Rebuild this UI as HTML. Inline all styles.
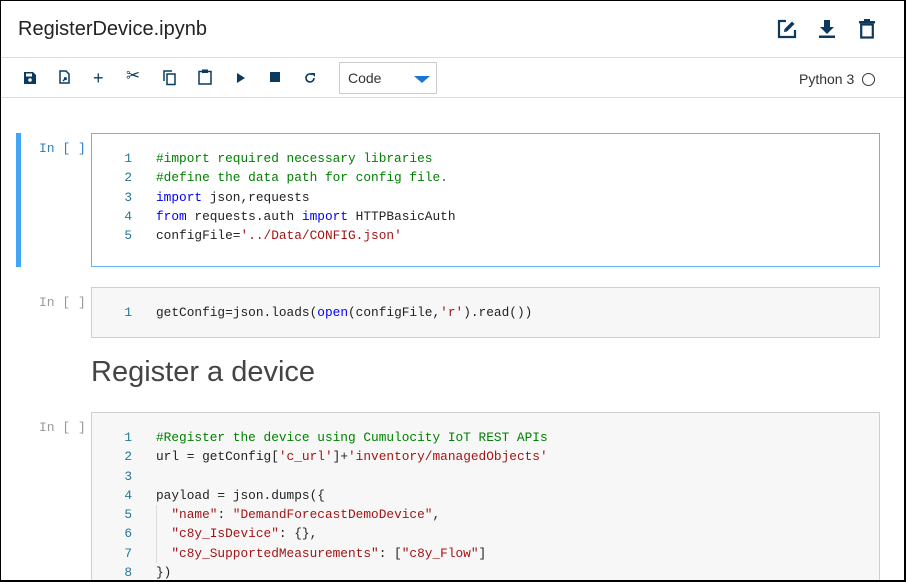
<!DOCTYPE html>
<html style="overflow:hidden"><head><meta charset="utf-8"><style>
*{margin:0;padding:0;box-sizing:border-box}
html,body{width:906px;height:582px;overflow:hidden}
body{background:#fff;font-family:"Liberation Sans",sans-serif;position:relative}
.frame{position:absolute;left:0;top:0;width:906px;height:582px;border:1px solid #000;border-right-width:2px;border-bottom-width:2px;pointer-events:none;z-index:10}
.title{position:absolute;left:18px;top:18px;font-size:20px;color:#222}
.hl{position:absolute;left:0;width:906px;height:1px;background:#dcdcdc}
.ic{position:absolute}
.sel{position:absolute;left:339px;top:62px;width:98px;height:32px;border:1px solid #ccc;font-size:14px;color:#333;padding:7px 0 0 8px}
.sel:after{content:"";position:absolute;right:6px;top:13px;border-left:8px solid transparent;border-right:8px solid transparent;border-top:7px solid #1976d2}
.py{position:absolute;left:799px;top:71px;font-size:14px;color:#333}
.circ{position:absolute;left:862px;top:73px;width:13px;height:13px;border:1.5px solid #333;border-radius:50%}
.prompt{position:absolute;left:39px;font-family:"Liberation Mono",monospace;font-size:13px;color:#999}
.box{position:absolute;left:91px;width:789px;background:#f7f7f7;border:1px solid #cfcfcf}
.code{position:absolute;font-family:"Liberation Mono",monospace;font-size:12.8px;line-height:19.25px;white-space:pre;color:#222}
.ln{position:absolute;left:122px;font-family:"Liberation Mono",monospace;font-size:12.8px;line-height:19.25px;white-space:pre;color:#237893;text-align:right;width:10px}
.c{color:#008000}.k{color:#0000ff}.s{color:#a31515}
h2{position:absolute;left:91px;top:356px;font-size:29px;font-weight:normal;color:#444;font-family:"Liberation Sans",sans-serif}
</style></head><body>
<div class="frame"></div>
<div class="title">RegisterDevice.ipynb</div>
<svg class="ic" style="left:777px;top:19px" width="20" height="20" viewBox="0 0 20 20"><path d="M9 2H2v16h16v-7" fill="none" stroke="#0b3a5e" stroke-width="2.2"/><path d="M7 13l0.5-3L15 2.5l2.5 2.5L10 12.5z" fill="#0b3a5e"/></svg>
<svg class="ic" style="left:818px;top:19px" width="18" height="20" viewBox="0 0 18 20"><path d="M6 1h6v7h4l-7 7-7-7h4z" fill="#0b3a5e"/><rect x="1" y="16.5" width="16" height="2.5" fill="#0b3a5e"/></svg>
<svg class="ic" style="left:859px;top:19px" width="16" height="20" viewBox="0 0 16 20"><rect x="0" y="2" width="16" height="2.4" fill="#0b3a5e"/><rect x="5" y="0" width="6" height="2.5" fill="#0b3a5e"/><rect x="2.2" y="5.5" width="11.6" height="13" fill="none" stroke="#0b3a5e" stroke-width="2.2"/></svg>
<div class="hl" style="top:57px"></div>
<div class="hl" style="top:97px"></div>
<svg class="ic" style="left:24px;top:72px" width="12" height="12" viewBox="0 0 12 12"><path d="M0 0h9l3 3v9H0z" fill="#0b3a5e"/><rect x="2" y="1.5" width="6" height="3" fill="#fff"/><circle cx="6" cy="8" r="1.8" fill="#fff"/></svg>
<svg class="ic" style="left:59px;top:70px" width="11" height="14" viewBox="0 0 11 14"><path d="M1 1h6l3 3v9H1z" fill="none" stroke="#0b3a5e" stroke-width="1.5"/><path d="M4 11l3-3M5 8h2v2" stroke="#0b3a5e" stroke-width="1.5" fill="none"/></svg>
<div class="ic" style="left:93px;top:68px;font-size:18px;color:#0b3a5e">+</div>
<div class="ic" style="left:126px;top:66px;font-size:17px;color:#0b3a5e">✂</div>
<svg class="ic" style="left:163px;top:70px" width="14" height="16" viewBox="0 0 14 16"><path d="M1 11V1h8" fill="none" stroke="#0b3a5e" stroke-width="1.5"/><rect x="4" y="4" width="8" height="10.5" fill="none" stroke="#0b3a5e" stroke-width="1.5"/></svg>
<svg class="ic" style="left:198px;top:69px" width="14" height="16" viewBox="0 0 14 16"><rect x="1" y="2.5" width="12" height="12.5" fill="none" stroke="#0b3a5e" stroke-width="1.5"/><rect x="4" y="0.5" width="6" height="3.5" fill="#0b3a5e"/></svg>
<svg class="ic" style="left:237px;top:73px" width="8" height="10" viewBox="0 0 8 10"><path d="M0 0l8 5-8 5z" fill="#0b3a5e"/></svg>
<div class="ic" style="left:270px;top:72px;width:10px;height:10px;background:#0b3a5e"></div>
<svg class="ic" style="left:304px;top:72px" width="12" height="12" viewBox="0 0 12 12"><path d="M10 6a4 4 0 1 1-1.5-3.2" fill="none" stroke="#0b3a5e" stroke-width="1.6"/><path d="M7 1h4v4z" fill="#0b3a5e"/></svg>
<div class="sel">Code</div>
<div class="py">Python 3</div><div class="circ"></div>
<div style="position:absolute;left:16px;top:133px;width:5px;height:134px;background:#42a5f5"></div>
<div class="prompt" style="top:141px;color:#307fc1">In [ ]</div>
<div class="box" style="top:133px;height:134px;background:#fff;border-color:#64b5f6"></div>
<div class="ln" style="top:149px">1
2
3
4
5</div>
<div class="code" style="left:156px;top:149px"><span class="c">#import required necessary libraries</span>
<span class="c">#define the data path for config file.</span>
<span class="k">import</span> json,requests
<span class="k">from</span> requests.auth <span class="k">import</span> HTTPBasicAuth
configFile=<span class="s">'../Data/CONFIG.json'</span></div>
<div class="prompt" style="top:295px">In [ ]</div>
<div class="box" style="top:287px;height:51px"></div>
<div class="ln" style="top:303px">1</div>
<div class="code" style="left:156px;top:303px">getConfig=json.loads(<span class="k">open</span>(configFile,<span class="s">'r'</span>).read())</div>
<h2>Register a device</h2>
<div class="prompt" style="top:420px">In [ ]</div>
<div class="box" style="top:412px;height:170px;border-bottom:none"></div>
<div class="ln" style="top:428px">1
2
3
4
5
6
7
8</div>
<div style="position:absolute;left:156px;top:505px;width:1px;height:58px;background:#ddd"></div>
<div class="code" style="left:156px;top:428px"><span class="c">#Register the device using Cumulocity IoT REST APIs</span>
url = getConfig[<span class="s">'c_url'</span>]+<span class="s">'inventory/managedObjects'</span>

payload = json.dumps({
  <span class="s">"name"</span>: <span class="s">"DemandForecastDemoDevice"</span>,
  <span class="s">"c8y_IsDevice"</span>: {},
  <span class="s">"c8y_SupportedMeasurements"</span>: [<span class="s">"c8y_Flow"</span>]
})</div>
</body></html>
